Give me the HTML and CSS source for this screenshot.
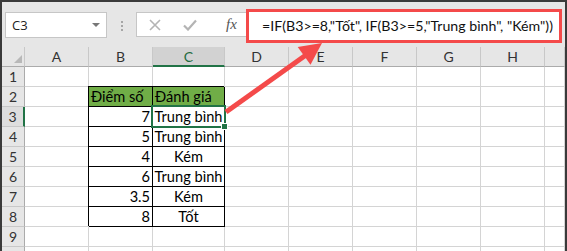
FILE: index.html
```html
<!DOCTYPE html>
<html lang="vi">
<head>
    <meta charset="UTF-8">
    <title>Hàm IF lồng nhau</title>
    <link rel="stylesheet" href="styles.css">
</head>
<body>
    <div class="window">
        <!-- thanh công thức -->
        <div class="formula-bar">
            <div class="name-box">
                <span>C3</span>
                <span class="caret"></span>
            </div>
            <div class="grip"><i></i><i></i><i></i></div>
            <div class="fx-tools">
                <svg class="tool" width="12" height="12" viewBox="0 0 12 12">
                    <path d="M1 1L11 11M11 1L1 11" stroke="#b4b4b4" stroke-width="1.6" fill="none"/>
                </svg>
                <svg class="tool" width="14" height="12" viewBox="0 0 14 12">
                    <path d="M1 6.5L5 10.5L13 1.5" stroke="#b4b4b4" stroke-width="2.2" fill="none"/>
                </svg>
                <span class="fx">fx</span>
            </div>
            <div class="formula">=IF(B3&gt;=8,"Tốt", IF(B3&gt;=5,"Trung bình", "Kém"))</div>
        </div>

        <!-- bảng tính -->
        <div class="sheet">
            <div class="hd corner"><span class="tri"></span></div>
            <div class="hd">A</div>
            <div class="hd">B</div>
            <div class="hd active-col">C</div>
            <div class="hd">D</div>
            <div class="hd">E</div>
            <div class="hd">F</div>
            <div class="hd">G</div>
            <div class="hd">H</div>
            <div class="hd"></div>

            <div class="rh">1</div>
            <div class="c"></div><div class="c"></div><div class="c"></div><div class="c"></div><div class="c"></div><div class="c"></div><div class="c"></div><div class="c"></div><div class="c"></div>

            <div class="rh">2</div>
            <div class="c"></div>
            <div class="c t head">Điểm số</div>
            <div class="c t head">Đánh giá</div>
            <div class="c"></div><div class="c"></div><div class="c"></div><div class="c"></div><div class="c"></div><div class="c"></div>

            <div class="rh active-row">3</div>
            <div class="c"></div>
            <div class="c t num">7</div>
            <div class="c t mid selected">Trung bình</div>
            <div class="c"></div><div class="c"></div><div class="c"></div><div class="c"></div><div class="c"></div><div class="c"></div>

            <div class="rh">4</div>
            <div class="c"></div>
            <div class="c t num">5</div>
            <div class="c t mid">Trung bình</div>
            <div class="c"></div><div class="c"></div><div class="c"></div><div class="c"></div><div class="c"></div><div class="c"></div>

            <div class="rh">5</div>
            <div class="c"></div>
            <div class="c t num">4</div>
            <div class="c t mid">Kém</div>
            <div class="c"></div><div class="c"></div><div class="c"></div><div class="c"></div><div class="c"></div><div class="c"></div>

            <div class="rh">6</div>
            <div class="c"></div>
            <div class="c t num">6</div>
            <div class="c t mid">Trung bình</div>
            <div class="c"></div><div class="c"></div><div class="c"></div><div class="c"></div><div class="c"></div><div class="c"></div>

            <div class="rh">7</div>
            <div class="c"></div>
            <div class="c t num">3.5</div>
            <div class="c t mid">Kém</div>
            <div class="c"></div><div class="c"></div><div class="c"></div><div class="c"></div><div class="c"></div><div class="c"></div>

            <div class="rh">8</div>
            <div class="c"></div>
            <div class="c t num">8</div>
            <div class="c t mid">Tốt</div>
            <div class="c"></div><div class="c"></div><div class="c"></div><div class="c"></div><div class="c"></div><div class="c"></div>

            <div class="rh">9</div>
            <div class="c"></div><div class="c"></div><div class="c"></div><div class="c"></div><div class="c"></div><div class="c"></div><div class="c"></div><div class="c"></div><div class="c"></div>

            <!-- hàng 10 chỉ lộ ra vài pixel -->
            <div class="rh"></div>
            <div class="c"></div><div class="c"></div><div class="c"></div><div class="c"></div><div class="c"></div><div class="c"></div><div class="c"></div><div class="c"></div><div class="c"></div>
        </div>
    </div>

    <!-- mũi tên chỉ vào công thức -->
    <svg class="arrow" width="567" height="251" viewBox="0 0 567 251">
        <line x1="226" y1="112" x2="306" y2="55" stroke="#f44a4a" stroke-width="5"/>
        <polygon points="322,43 310.5,64.7 297.7,46.9" fill="#f44a4a"/>
    </svg>
</body>
</html>
```

FILE: styles.css
```css
html, body {
    margin: 0;
    padding: 0;
    height: 100%;
    overflow: hidden;
}
body {
    background-color: #3a3a3a;
    padding: 2px 2px 0 2px;
    box-sizing: border-box;
    position: relative;
}
.window {
    background-color: #e6e6e6;
    height: 100%;
    overflow: hidden;
}

/* Thanh công thức */
.formula-bar {
    height: 45px;
    display: flex;
    align-items: flex-start;
    box-sizing: border-box;
}
.name-box {
    margin: 10px 0 0 3px;
    width: 102px;
    height: 26px;
    box-sizing: border-box;
    background-color: white;
    border: 1px solid #c6c6c6;
    display: flex;
    align-items: center;
    justify-content: space-between;
    padding: 0 6px 0 6px;
    font-family: "Open Sans", sans-serif;
    font-size: 13px;
    color: #222;
}
.caret {
    width: 0;
    height: 0;
    border-left: 4px solid transparent;
    border-right: 4px solid transparent;
    border-top: 4px solid #777;
}
.grip {
    margin: 19px 0 0 14px;
    display: flex;
    flex-direction: column;
    gap: 2px;
}
.grip i {
    width: 2px;
    height: 2px;
    background-color: #a6a6a6;
}
.fx-tools {
    margin: 10px 0 0 13px;
    width: 110px;
    height: 25px;
    box-sizing: border-box;
    background-color: white;
    border: 1px solid #c6c6c6;
    border-right: none;
    display: flex;
    align-items: center;
    padding-left: 12px;
}
.tool {
    margin-right: 22px;
}
.tool + .tool {
    margin-right: 29px;
}
.fx {
    font-family: "Liberation Serif", serif;
    font-style: italic;
    font-size: 15px;
    color: #555;
}
.formula {
    margin-top: 7px;
    width: 316px;
    height: 34px;
    box-sizing: border-box;
    border: 3px solid #f44a4a;
    background-color: white;
    padding-left: 13px;
    font-family: Lato, sans-serif;
    font-size: 14.2px;
    line-height: 28px;
    color: #111;
    white-space: nowrap;
}

/* Bảng tính */
.sheet {
    display: grid;
    grid-template-columns: 23px 64px 64px 72px 64px 64px 64px 64px 64px 1fr;
    grid-auto-rows: 20px;
    background-color: white;
    font-family: Lato, sans-serif;
    font-size: 14.6px;
}
.sheet > div {
    box-sizing: border-box;
    border-right: 1px solid #d4d4d4;
    border-bottom: 1px solid #d4d4d4;
    line-height: 19px;
    white-space: nowrap;
}
.sheet .hd {
    background-color: #e6e6e6;
    border-right-color: #c8c8c8;
    border-bottom-color: #ababab;
    text-align: center;
    color: #333;
    font-size: 14px;
}
.sheet .corner {
    display: flex;
    justify-content: flex-end;
    align-items: flex-end;
    padding: 0 2px 3px 0;
}
.tri {
    width: 0;
    height: 0;
    border-left: 8px solid transparent;
    border-bottom: 8px solid #b8b8b8;
}
.sheet .active-col {
    background-color: #d2d2d2;
    border-bottom: 2px solid #217346;
    color: #1e6b40;
}
.sheet .rh {
    background-color: #e6e6e6;
    border-right-color: #ababab;
    border-bottom-color: #c8c8c8;
    text-align: center;
    color: #333;
    font-size: 14px;
}
.sheet .active-row {
    background-color: #dedede;
    border-right: 2px solid #217346;
}
.sheet .t {
    border-right-color: #000;
    border-bottom-color: #000;
    box-shadow: -1px -1px 0 #000;
    color: #000;
}
.sheet .head {
    background-color: #70ad47;
    padding-left: 2px;
}
.sheet .num {
    text-align: right;
    padding-right: 2px;
}
.sheet .mid {
    text-align: center;
}
.sheet .selected {
    position: relative;
}
.selected::after {
    content: '';
    position: absolute;
    left: -2px;
    top: -2px;
    right: -2px;
    bottom: -2px;
    border: 2px solid #217346;
}
.selected::before {
    content: '';
    position: absolute;
    right: -4px;
    bottom: -4px;
    width: 5px;
    height: 5px;
    background-color: #217346;
    border: 1px solid white;
    z-index: 1;
}

.arrow {
    position: absolute;
    left: 0;
    top: 0;
    pointer-events: none;
}
```
